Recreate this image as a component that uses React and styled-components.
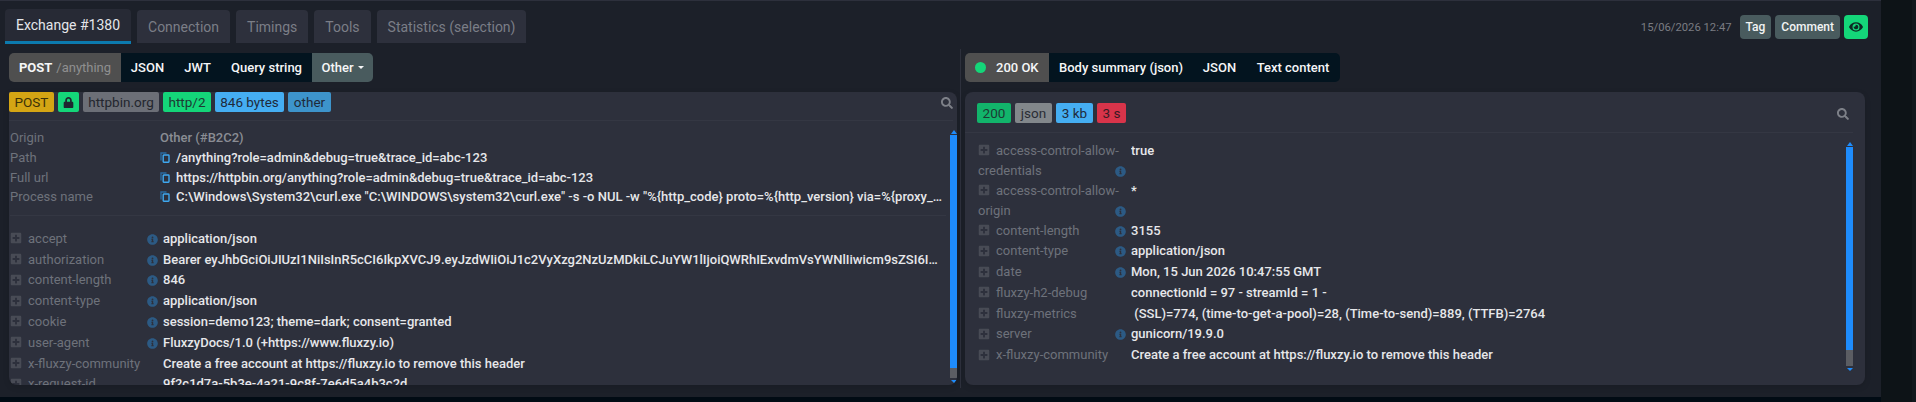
import styled, { createGlobalStyle } from "styled-components";
import { FaPlusSquare, FaInfoCircle, FaLock, FaEye, FaSearch } from "react-icons/fa";

const Global = createGlobalStyle`
  html, body { margin: 0; padding: 0; background: #010b14; }
  body { font-family: Roboto, "Liberation Sans", sans-serif; }
  * { box-sizing: border-box; }
`;

const requestInfo = [
  { name: "Path", value: "/anything?role=admin&debug=true&trace_id=abc-123" },
  { name: "Full url", value: "https://httpbin.org/anything?role=admin&debug=true&trace_id=abc-123" },
  {
    name: "Process name",
    value:
      'C:\\Windows\\System32\\curl.exe "C:\\WINDOWS\\system32\\curl.exe" -s -o NUL -w "%{http_code} proto=%{http_version} via=%{proxy_ssl_verify_result} time=%{time_total}"',
  },
];

const requestHeaders = [
  { name: "accept", value: "application/json", info: true },
  {
    name: "authorization",
    value:
      "Bearer eyJhbGciOiJIUzI1NiIsInR5cCI6IkpXVCJ9.eyJzdWIiOiJ1c2VyXzg2NzUzMDkiLCJuYW1lIjoiQWRhIExvdmVsYWNlIiwicm9sZSI6ImFkbWluIn0",
    info: true,
  },
  { name: "content-length", value: "846", info: true },
  { name: "content-type", value: "application/json", info: true },
  { name: "cookie", value: "session=demo123; theme=dark; consent=granted", info: true },
  { name: "user-agent", value: "FluxzyDocs/1.0 (+https://www.fluxzy.io)", info: true },
  { name: "x-fluxzy-community", value: "Create a free account at https://fluxzy.io to remove this header" },
  { name: "x-request-id", value: "9f2c1d7a-5b3e-4a21-9c8f-7e6d5a4b3c2d" },
];

const responseHeaders = [
  { name: "access-control-allow-credentials", value: "true", info: true },
  { name: "access-control-allow-origin", value: "*", info: true },
  { name: "content-length", value: "3155", info: true },
  { name: "content-type", value: "application/json", info: true },
  { name: "date", value: "Mon, 15 Jun 2026 10:47:55 GMT", info: true },
  { name: "fluxzy-h2-debug", value: "connectionId = 97 - streamId = 1 -" },
  { name: "fluxzy-metrics", value: "\u00a0(SSL)=774, (time-to-get-a-pool)=28, (Time-to-send)=889, (TTFB)=2764" },
  { name: "server", value: "gunicorn/19.9.0", info: true },
  { name: "x-fluxzy-community", value: "Create a free account at https://fluxzy.io to remove this header" },
];

// two sheets: the back one is dimmer than the front one
const CopyIcon = () => (
  <CopySvg viewBox="0 0 10 11" width="10" height="11" fill="none">
    <path d="M6.5 1H1v7.5" stroke="#2a6aa0" strokeWidth="1.4" />
    <rect x="3.2" y="3" width="5.8" height="7.2" rx="0.6" stroke="#3fa8f0" strokeWidth="1.4" />
  </CopySvg>
);

const HeaderRows = ({ rows }) =>
  rows.map((h) => (
    <HeaderRow key={h.name}>
      <HeaderName>
        <PlusIcon />
        {h.name}
        {h.info && <InfoIcon />}
      </HeaderName>
      <Value>{h.value}</Value>
    </HeaderRow>
  ));

const Scrollbar = ({ $thumb, $track }) => (
  <ScrollTrack>
    <ArrowUp />
    <Thumb $h={$thumb} />
    <Rest $h={$track} />
    <ArrowDown />
  </ScrollTrack>
);

const App = () => {
  return (
    <>
      <Global />
      <Page>
        <Main>
          <TopBar>
            <Tab $active>Exchange #1380</Tab>
            <Tab>Connection</Tab>
            <Tab>Timings</Tab>
            <Tab>Tools</Tab>
            <Tab>Statistics (selection)</Tab>
            <Actions>
              <DateText>15/06/2026 12:47</DateText>
              <ActionButton>Tag</ActionButton>
              <ActionButton>Comment</ActionButton>
              <EyeButton>
                <FaEye size={14} />
              </EyeButton>
            </Actions>
          </TopBar>
          <Split>
            <LeftColumn>
              <SubTabs>
                <SubTab $w={112} $kind="title">
                  <strong>POST</strong>
                  <Muted>/anything</Muted>
                </SubTab>
                <SubTab $w={53}>JSON</SubTab>
                <SubTab $w={47}>JWT</SubTab>
                <SubTab $w={91}>Query string</SubTab>
                <SubTab $w={61} $kind="other">
                  Other
                  <Caret />
                </SubTab>
              </SubTabs>
              <Panel>
                <BadgeRow>
                  <Badge $w={45} $bg="#d4a514" $fg="#3b3108">POST</Badge>
                  <Badge $w={21} $bg="#14d679" $fg="#1f2630"><FaLock size={11} /></Badge>
                  <Badge $w={76} $bg="#6c6f77" $fg="#23262e">httpbin.org</Badge>
                  <Badge $w={48} $bg="#14d679" $fg="#1d3a33">http/2</Badge>
                  <Badge $w={69} $bg="#45aef2" $fg="#1f2a3a">846 bytes</Badge>
                  <Badge $w={43} $bg="#3d94cb" $fg="#1f2a3a">other</Badge>
                  <SearchIcon />
                </BadgeRow>
                <PanelBody>
                  <Rows $top={7}>
                    <InfoSection>
                      <InfoRow>
                        <InfoName>Origin</InfoName>
                        <OriginValue>Other (#B2C2)</OriginValue>
                      </InfoRow>
                      {requestInfo.map((r) => (
                        <InfoRow key={r.name}>
                          <InfoName>{r.name}</InfoName>
                          <CopyIcon />
                          <Value>{r.value}</Value>
                        </InfoRow>
                      ))}
                    </InfoSection>
                    <HeaderRows rows={requestHeaders} />
                  </Rows>
                  <Scrollbar $thumb={233} $track={10} />
                </PanelBody>
              </Panel>
            </LeftColumn>
            <RightColumn>
              <SubTabs>
                <SubTab $w={84} $kind="status">
                  <StatusDot />
                  200 OK
                </SubTab>
                <SubTab $w={144}>Body summary (json)</SubTab>
                <SubTab $w={53}>JSON</SubTab>
                <SubTab $w={94}>Text content</SubTab>
              </SubTabs>
              <Panel $rounded>
                <BadgeRow $rounded>
                  <Badge $w={34} $bg="#12b46b" $fg="#1d3a33">200</Badge>
                  <Badge $w={37} $bg="#82878b" $fg="#2a2d35">json</Badge>
                  <Badge $w={37} $bg="#45aef2" $fg="#1f2a3a">3 kb</Badge>
                  <Badge $w={29} $bg="#d8344a" $fg="#3a1a24">3 s</Badge>
                  <SearchIcon />
                </BadgeRow>
                <PanelBody $rounded>
                  <Rows $top={7.5} $left={13}>
                    <HeaderRows rows={responseHeaders} />
                  </Rows>
                  <Scrollbar $thumb={203} $track={16} />
                </PanelBody>
              </Panel>
            </RightColumn>
          </Split>
        </Main>
        <Gutter />
      </Page>
    </>
  );
};

export default App;

const Page = styled.div`
  display: flex;
  width: 1916px;
  height: 402px;
  overflow: hidden;
  background: #010b14;
`;

const Main = styled.div`
  width: 1881px;
  height: 397px;
  display: flex;
  flex-direction: column;
  background: #1c2029;
  border-top: 1px solid #2d303c;
`;

const Gutter = styled.div`
  width: 35px;
  height: 402px;
  background: #0d1317;
  border-right: 4px solid #12181d;
`;

const TopBar = styled.div`
  height: 48px;
  padding: 8px 13px 0 5px;
  display: flex;
  align-items: flex-start;
  gap: 6px;
`;

const Tab = styled.div`
  height: ${(p) => (p.$active ? "35px" : "33px")};
  margin-top: ${(p) => (p.$active ? "0" : "1px")};
  padding: 0 11px;
  display: flex;
  align-items: center;
  font-size: 14px;
  color: ${(p) => (p.$active ? "#e4e6ea" : "#7b7e87")};
  background: ${(p) => (p.$active ? "#272a35" : "#2d303c")};
  border-radius: 4px 4px 0 0;
  border-bottom: ${(p) => (p.$active ? "3px solid #0c7aae" : "0")};
`;

const Actions = styled.div`
  margin-left: auto;
  margin-top: 6px;
  display: flex;
  align-items: center;
  gap: 4px;
`;

const DateText = styled.span`
  font-size: 11.25px;
  color: #7a7c82;
  margin-right: 4px;
`;

const ActionButton = styled.div`
  height: 24px;
  padding: 0 6px;
  display: flex;
  align-items: center;
  font-size: 12px;
  font-weight: 500;
  color: #f2f4f4;
  background: #495b5e;
  border-radius: 4px;
`;

const EyeButton = styled(ActionButton)`
  width: 24px;
  padding: 0;
  justify-content: center;
  color: #0d2a24;
  background: #14d679;
`;

const Split = styled.div`
  display: flex;
  padding-left: 9px;
`;

const LeftColumn = styled.div`
  width: 951px;
  padding: 4px 3px 3px 0;
  display: flex;
  flex-direction: column;
  gap: 10px;
`;

const RightColumn = styled.div`
  width: 905px;
  padding: 4px 0 3px 4px;
  border-left: 1px solid #2d303c;
  display: flex;
  flex-direction: column;
  gap: 10px;
`;

const SubTabs = styled.div`
  display: flex;
  height: 29px;
  border-radius: 5px;
  overflow: hidden;
  align-self: flex-start;
`;

const subTabBg = { title: "#4f4f4f", status: "#4f4f4f", other: "#495b5e" };

const SubTab = styled.div`
  width: ${(p) => p.$w}px;
  display: flex;
  align-items: center;
  justify-content: ${(p) => (p.$kind === "status" ? "flex-start" : "center")};
  padding-left: ${(p) => (p.$kind === "status" ? "10px" : "0")};
  gap: ${(p) => (p.$kind === "title" ? "4px" : p.$kind === "status" ? "10px" : "0")};
  font-size: 13px;
  font-weight: 500;
  color: #f5f6f7;
  background: ${(p) => subTabBg[p.$kind] || "#03141f"};
  strong {
    font-weight: 700;
    font-size: 13px;
  }
`;

const Muted = styled.span`
  color: #8f8f8f;
  font-weight: 400;
`;

const Caret = styled.span`
  margin-left: 4px;
  border-left: 3px solid transparent;
  border-right: 3px solid transparent;
  border-top: 3px solid #f5f6f7;
`;

const StatusDot = styled.span`
  width: 11px;
  height: 11px;
  border-radius: 50%;
  background: #14d679;
`;

const Panel = styled.div`
  height: 293px;
  display: flex;
  flex-direction: column;
  background: #2d303c;
  overflow: hidden;
  border-radius: ${(p) => (p.$rounded ? "8px" : "0 8px 8px 8px")};
  box-shadow: 0 2px 6px rgba(0, 0, 0, 0.12);
`;

const BadgeRow = styled.div`
  flex: none;
  height: ${(p) => (p.$rounded ? "41px" : "29px")};
  margin-right: ${(p) => (p.$rounded ? "12px" : "4px")};
  padding: ${(p) => (p.$rounded ? "11px 4px 0 12px" : "0")};
  display: flex;
  align-items: flex-start;
  gap: 4px;
  border-bottom: 1px solid #343743;
`;

const Badge = styled.span`
  width: ${(p) => p.$w}px;
  height: 20px;
  display: inline-flex;
  align-items: center;
  justify-content: center;
  font-size: 13.5px;
  color: ${(p) => p.$fg};
  background: ${(p) => p.$bg};
  border-radius: 2px;
`;

const SearchIcon = styled(FaSearch).attrs({ size: 12 })`
  margin-left: auto;
  margin-top: 5px;
  color: #7d8088;
`;

const PanelBody = styled.div`
  flex: 1;
  min-height: 0;
  display: flex;
  padding-right: ${(p) => (p.$rounded ? "12px" : "0")};
`;

const Rows = styled.div`
  flex: 1;
  min-width: 0;
  padding-top: ${(p) => p.$top}px;
  padding-left: ${(p) => p.$left || 1}px;
  padding-right: 4px;
  overflow: hidden;
`;

const InfoSection = styled.div`
  margin-bottom: 13px;
  padding-bottom: 8px;
  border-bottom: 1px solid #343743;
`;

const InfoRow = styled.div`
  height: 19.7px;
  display: flex;
  align-items: center;
  font-size: 13px;
`;

const InfoName = styled.div`
  width: 150px;
  flex: none;
  color: #6e727b;
`;

const OriginValue = styled.div`
  color: #8a8d94;
  font-weight: 500;
`;

const CopySvg = styled.svg`
  flex: none;
  margin-right: 6px;
`;

const HeaderRow = styled.div`
  min-height: 20.8px;
  display: flex;
  align-items: flex-start;
  font-size: 13px;
  line-height: 20px;
`;

const HeaderName = styled.div`
  width: 153px;
  flex: none;
  color: #6e727b;
`;

const PlusIcon = styled(FaPlusSquare).attrs({ size: 12 })`
  margin-right: 6px;
  color: #484b55;
  vertical-align: -1.5px;
`;

const InfoIcon = styled(FaInfoCircle).attrs({ size: 11 })`
  float: right;
  margin: 5px 5px 0 0;
  color: #2c5a84;
`;

const Value = styled.div`
  flex: 1;
  min-width: 0;
  font-weight: 500;
  font-size: 13px;
  color: #e6e7ea;
  white-space: nowrap;
  overflow: hidden;
  text-overflow: ellipsis;
`;

const ScrollTrack = styled.div`
  flex: none;
  width: 7px;
  margin-top: 9px;
  margin-bottom: 2px;
  display: flex;
  flex-direction: column;
  align-items: center;
`;

const ArrowUp = styled.span`
  margin-bottom: 1px;
  border-left: 3.5px solid transparent;
  border-right: 3.5px solid transparent;
  border-bottom: 4px solid #1e8cfc;
`;

const ArrowDown = styled.span`
  margin-top: 2px;
  border-left: 3.5px solid transparent;
  border-right: 3.5px solid transparent;
  border-top: 3px solid #1e8cfc;
`;

const Thumb = styled.div`
  width: 7px;
  height: ${(p) => p.$h}px;
  background: #1e8cfc;
`;

const Rest = styled.div`
  width: 7px;
  height: ${(p) => p.$h}px;
  background: #5b5d63;
`;
